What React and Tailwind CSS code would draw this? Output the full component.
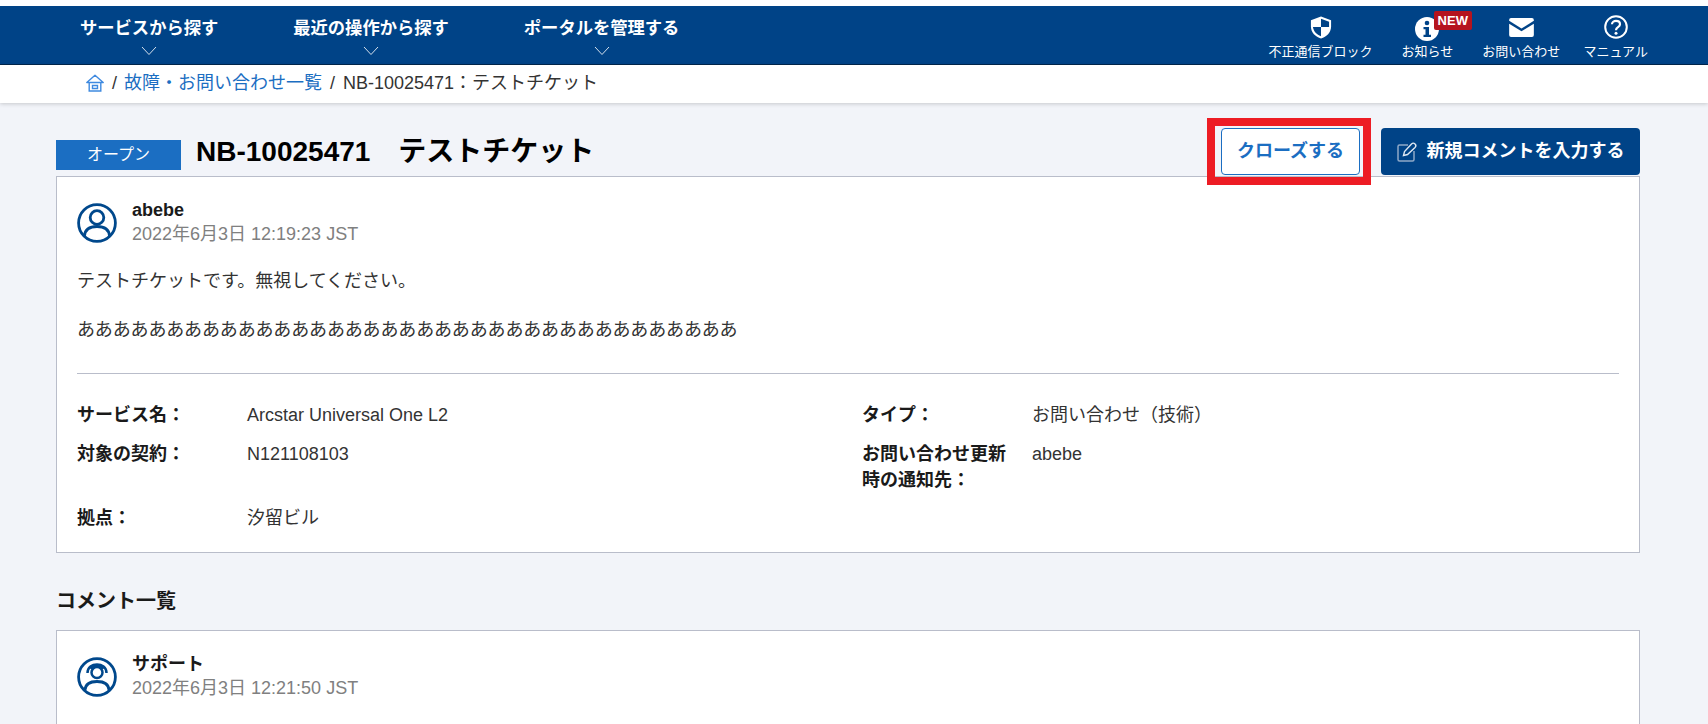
const font = { fontFamily: '"Liberation Sans", "Noto Sans CJK JP", sans-serif' };

function ChevronIcon() {
  return (
    <svg width="16" height="10" viewBox="0 0 16 10" fill="none" stroke="#d5e0ec" strokeWidth="1">
      <path d="M1 1 L8 8.5 L15 1" />
    </svg>
  );
}

function ShieldIcon() {
  return (
    <svg width="22" height="23" viewBox="0 0 24 25">
      <path d="M12 0.5 L23 4.5 V11 C23 18 18 22.5 12 24.5 C6 22.5 1 18 1 11 V4.5 Z" fill="#fff" />
      <path d="M12 3 L20.8 6.2 V12 H12 Z M12 12 V22 C7.5 20.5 3.8 16.8 3.2 12 Z" fill="#004387" />
    </svg>
  );
}

function InfoIcon() {
  return (
    <svg width="24" height="24" viewBox="0 0 24 24">
      <circle cx="12" cy="12" r="12" fill="#fff" />
      <circle cx="12" cy="6" r="2.3" fill="#004387" />
      <path d="M8.5 10 H14 V17.8 H16 V20 H8.5 V17.8 H10.5 V12.2 H8.5 Z" fill="#004387" />
    </svg>
  );
}

function MailIcon() {
  return (
    <svg width="25" height="19" viewBox="0 0 26 20">
      <path d="M2 0 H24 A2 2 0 0 1 26 2 V3 L13 11 L0 3 V2 A2 2 0 0 1 2 0 Z" fill="#fff" />
      <path d="M0 6 L13 14 L26 6 V18 A2 2 0 0 1 24 20 H2 A2 2 0 0 1 0 18 Z" fill="#fff" />
    </svg>
  );
}

function HelpIcon() {
  return (
    <svg width="24" height="24" viewBox="0 0 24 24" fill="none" stroke="#fff" strokeWidth="2">
      <circle cx="12" cy="12" r="10.8" />
      <path d="M8 9.3 C8 4.8 16 4.8 16 9.3 C16 12.3 12 12 12 15.2" strokeWidth="2.2" />
      <circle cx="12" cy="18.3" r="1.5" fill="#fff" stroke="none" />
    </svg>
  );
}

function HomeIcon() {
  return (
    <svg width="18" height="18" viewBox="0 0 18 18" fill="none" stroke="#3f8ae0" strokeWidth="1.4">
      <path d="M0.8 8.5 L9 1.2 L17.2 8.5 Z" strokeLinejoin="round" />
      <path d="M3.2 8.5 V17 H14.8 V8.5" />
      <path d="M6.5 11.5 H11.5 V14.5 H6.5 Z" />
    </svg>
  );
}

function EditIcon() {
  return (
    <svg width="20" height="20" viewBox="0 0 20 20" fill="none">
      <path d="M11 3 H2.5 A1.5 1.5 0 0 0 1 4.5 V17.5 A1.5 1.5 0 0 0 2.5 19 H15.5 A1.5 1.5 0 0 0 17 17.5 V9" stroke="#8fa9c8" strokeWidth="1.5" />
      <path d="M6.5 13.5 L7.5 9.5 L14.5 2 A1.9 1.9 0 0 1 18 5.5 L10.5 12.5 Z" stroke="#dfe8f2" strokeWidth="1.4" />
    </svg>
  );
}

function UserIcon() {
  return (
    <svg width="40" height="40" viewBox="0 0 40 40" fill="none" stroke="#00488c" strokeWidth="2.8">
      <circle cx="20" cy="20" r="18.4" />
      <circle cx="20" cy="14.5" r="6.8" />
      <path d="M7.5 33 C8 26 13 23.5 20 23.5 C27 23.5 32 26 32.5 33" />
    </svg>
  );
}

function SupportIcon() {
  return (
    <svg width="40" height="40" viewBox="0 0 40 40" fill="none" stroke="#00488c" strokeWidth="2.8">
      <circle cx="20" cy="20" r="18.4" />
      <circle cx="20" cy="15.5" r="5.5" strokeWidth="2.5" />
      <path d="M10.5 16 C10.5 4.5 29.5 4.5 29.5 16" strokeWidth="2.5" />
      <path d="M14 12 C15 7.5 25 7.5 26 12" strokeWidth="2" />
      <path d="M8 33 C8.5 27 13 24.5 20 24.5 C27 24.5 31.5 27 32 33" />
    </svg>
  );
}

function NavMenu({ label, className }) {
  return (
    <div className={`flex flex-col items-center ${className}`}>
      <span className="text-[17.3px] leading-[24px] font-bold text-white">{label}</span>
      <div className="mt-[6px]"><ChevronIcon /></div>
    </div>
  );
}

function NavLink({ icon, label, className }) {
  return (
    <div className={`relative flex flex-col items-center ${className}`}>
      <div className="h-[28px] flex items-center justify-center">{icon}</div>
      <span className="text-[13px] leading-[17px] text-white mt-[2px]">{label}</span>
    </div>
  );
}

function Author({ icon, name, date }) {
  return (
    <div className="flex items-center gap-[15px]">
      {icon}
      <div className="pb-[2px]">
        <div className="text-[18px] leading-[24px] font-bold text-[#1a1a1a]">{name}</div>
        <div className="text-[18px] leading-[24px] text-[#808080]">{date}</div>
      </div>
    </div>
  );
}

function Field({ label, value }) {
  return (
    <div className="flex">
      <div className="w-[170px] shrink-0 text-[18px] leading-[26px] font-bold text-[#1a1a1a] pr-4">{label}</div>
      <div className="text-[18px] leading-[26px] text-[#333]">{value}</div>
    </div>
  );
}

export default function App() {
  return (
    <div style={font} className="relative h-[724px] overflow-hidden bg-[#f2f4f9]">
      <header className="pt-[6px] bg-white">
        <nav className="h-[59px] bg-[#004387] border-b border-[#00264d] flex items-start justify-between pl-[80px] pr-[60px]">
          <div className="flex pt-[10px]">
            <NavMenu label="サービスから探す" />
            <NavMenu label="最近の操作から探す" className="ml-[75px]" />
            <NavMenu label="ポータルを管理する" className="ml-[75px]" />
          </div>
          <div className="flex pt-[7px]">
            <NavLink icon={<ShieldIcon />} label="不正通信ブロック" />
            <NavLink
              icon={
                <div className="mt-[4px]">
                  <InfoIcon />
                  <span className="absolute -top-[2px] left-[32px] bg-[#b5141e] text-white text-[13px] leading-[19px] font-bold px-[4px] rounded-[2px]">
                    NEW
                  </span>
                </div>
              }
              label="お知らせ"
              className="ml-[29px]"
            />
            <NavLink icon={<MailIcon />} label="お問い合わせ" className="ml-[29px]" />
            <NavLink icon={<HelpIcon />} label="マニュアル" className="ml-[23px]" />
          </div>
        </nav>
        <div className="h-[38px] pb-[2px] bg-white shadow-[0_1px_4px_rgba(0,0,0,0.18)] flex items-center pl-[86px] text-[18px] text-[#333]">
          <HomeIcon />
          <span className="ml-[8px] mr-[7px]">/</span>
          <span className="text-[#1b6ec2]">故障・お問い合わせ一覧</span>
          <span className="mx-[8px]">/</span>
          <span>NB-10025471：テストチケット</span>
        </div>
      </header>

      <main className="pl-[56px] pr-[68px]">
        <div className="flex items-end justify-between h-[73px] pb-[1px]">
          <div className="flex items-end gap-[15px] mb-[5px]">
            <div className="w-[125px] h-[30px] bg-[#1b6ec2] text-white text-[16px] flex items-center justify-center">
              オープン
            </div>
            <h1 className="text-[28px] leading-[36px] font-bold text-black whitespace-pre">NB-10025471　テストチケット</h1>
          </div>
          <div className="flex gap-[21px]">
            <button className="w-[139px] h-[47px] bg-white border border-[#1b6ec2] rounded-[4px] text-[18px] font-bold text-[#1b6ec2]">
              クローズする
            </button>
            <button className="w-[259px] h-[47px] bg-[#004387] rounded-[4px] text-[18px] font-bold text-white flex items-center justify-center gap-[10px]">
              <EditIcon />
              新規コメントを入力する
            </button>
          </div>
        </div>

        <section className="bg-white border border-[#b9bdca] h-[377px] px-[20px] pt-[21px]">
          <Author icon={<UserIcon />} name="abebe" date="2022年6月3日 12:19:23 JST" />
          <p className="mt-[21px] text-[18px] leading-[24px] text-[#333]">テストチケットです。無視してください。</p>
          <p className="mt-[25px] text-[18px] leading-[24px] tracking-[-0.15px] text-[#333]">
            あああああああああああああああああああああああああああああああああああああ
          </p>
          <hr className="mt-[31px] border-[#b9bdca]" />
          <div className="grid grid-cols-2 gap-x-[28px] mt-[28px]">
            <div className="flex flex-col">
              <Field label="サービス名：" value="Arcstar Universal One L2" />
              <div className="mt-[13px]"><Field label="対象の契約：" value="N121108103" /></div>
              <div className="mt-[38px]"><Field label="拠点：" value="汐留ビル" /></div>
            </div>
            <div className="flex flex-col">
              <Field label="タイプ：" value="お問い合わせ（技術）" />
              <div className="mt-[13px]"><Field label="お問い合わせ更新時の通知先：" value="abebe" /></div>
            </div>
          </div>
        </section>

        <h2 className="mt-[36px] text-[20px] leading-[24px] font-bold text-[#1a1a1a]">コメント一覧</h2>

        <section className="mt-[17px] bg-white border border-[#b9bdca] h-[200px] px-[20px] pt-[21px]">
          <Author icon={<SupportIcon />} name="サポート" date="2022年6月3日 12:21:50 JST" />
        </section>
      </main>

      {/* red annotation around the close button */}
      <div className="absolute left-[1207px] top-[118px] w-[164px] h-[67px] border-[8px] border-[#ed1c24]" />
    </div>
  );
}
